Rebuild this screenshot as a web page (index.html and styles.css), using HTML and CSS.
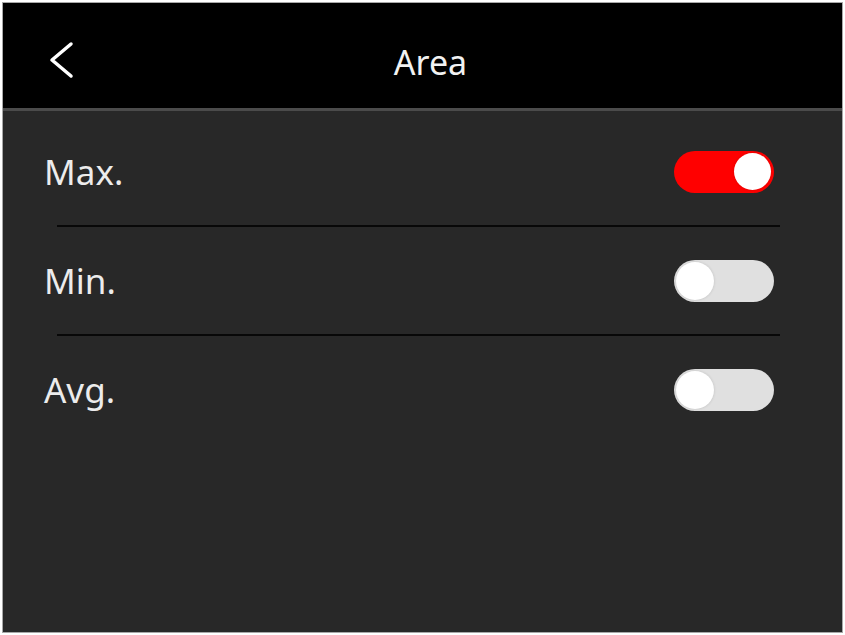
FILE: index.html
```html
<!DOCTYPE html>
<html lang="en">
<head>
    <meta charset="UTF-8">
    <meta name="viewport" content="width=device-width, initial-scale=1.0">
    <title>Area</title>
    <link rel="stylesheet" href="styles.css">
</head>
<body>
    <div class="screen">
        <header class="header">
            <button class="back-button" aria-label="Back">
                <svg width="26" height="38" viewBox="0 0 26 38">
                    <polyline points="23,3 4,19 23,35" fill="none" stroke="#fff" stroke-width="3.5" stroke-linecap="round" stroke-linejoin="round"/>
                </svg>
            </button>
            <h1 class="title">Area</h1>
            <div></div>
        </header>

        <div class="settings-list">
            <div class="setting-row">
                <span class="setting-label">Max.</span>
                <span class="toggle on"><span class="knob"></span></span>
            </div>
            <div class="divider"></div>
            <div class="setting-row">
                <span class="setting-label">Min.</span>
                <span class="toggle"><span class="knob"></span></span>
            </div>
            <div class="divider"></div>
            <div class="setting-row">
                <span class="setting-label">Avg.</span>
                <span class="toggle"><span class="knob"></span></span>
            </div>
        </div>
    </div>
</body>
</html>
```

FILE: styles.css
```css
* {
    margin: 0;
    padding: 0;
    box-sizing: border-box;
    font-family: "Noto Sans", "Open Sans", sans-serif;
}

body {
    background-color: #ffffff;
    padding: 3px;
}

.screen {
    height: 629px;
    background-color: #282828;
    box-shadow: 0 0 0 1px #a8a8a8;
    overflow: hidden;
}

.header {
    display: grid;
    grid-template-columns: 1fr auto 1fr;
    align-items: center;
    height: 108px;
    padding: 13px 45px 0;
    background-color: #000;
    border-bottom: 3px solid #4b4b4b;
}

.back-button {
    justify-self: start;
    display: flex;
    background: none;
    border: none;
    margin-bottom: 4px;
    cursor: pointer;
}

.title {
    color: #f2f2f2;
    font-size: 34px;
    font-weight: 400;
    padding-left: 16px;
}

.settings-list {
    padding-top: 7px;
}

.setting-row {
    display: flex;
    align-items: center;
    justify-content: space-between;
    height: 107px;
    padding: 0 68px 0 41px;
}

.setting-label {
    color: #ececec;
    font-size: 35px;
}

.divider {
    height: 2px;
    margin: 0 62px 0 54px;
    background-color: #080808;
}

.toggle {
    display: flex;
    align-items: center;
    width: 100px;
    height: 42px;
    padding: 0 2px;
    border-radius: 21px;
    background-color: #e0e0e0;
}

.toggle .knob {
    width: 38px;
    height: 38px;
    border-radius: 50%;
    background-color: #ffffff;
    box-shadow: 0 0 3px rgba(0, 0, 0, 0.15);
}

.toggle.on {
    justify-content: flex-end;
    background-color: #ff0000;
    padding: 0 3px;
}

.toggle.on .knob {
    width: 37px;
    height: 37px;
}
```
